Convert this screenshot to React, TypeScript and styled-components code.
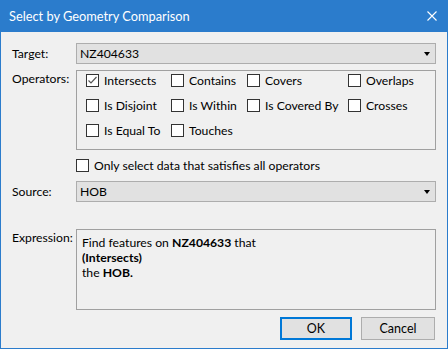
import React from 'react';
import styled, { createGlobalStyle } from 'styled-components';

const GlobalStyle = createGlobalStyle`
  body {
    margin: 0;
    background: #ffffff;
    font-family: Lato, 'Noto Sans', sans-serif;
    font-size: 12.2px;
    color: #000000;
  }
`;

const Window = styled.div`
  width: 448px;
  height: 349px;
  box-sizing: border-box;
  border: 1px solid #2b7ccc;
  border-top: none;
  background: #f0f0f0;
  display: flex;
  flex-direction: column;
`;

const TitleBar = styled.div`
  height: 31px;
  margin: 0 -1px;
  background: #2b7ccc;
  color: #ffffff;
  display: flex;
  align-items: center;
  justify-content: space-between;
  padding: 0 11px 1px 9px;
  font-size: 12.8px;
`;

const CloseIcon = () => (
  <svg width="10" height="10" viewBox="0 0 10 10">
    <path d="M0.5 0.5 L9.5 9.5 M9.5 0.5 L0.5 9.5" stroke="#ffffff" strokeWidth="1.1" />
  </svg>
);

const Body = styled.div`
  flex: 1;
  padding: 11px 11px 0 11px;
  display: flex;
  flex-direction: column;
`;

const Row = styled.div<{ $top?: number }>`
  display: grid;
  grid-template-columns: 64px 1fr;
  margin-top: ${(p) => p.$top ?? 0}px;
`;

const Label = styled.div<{ $pad?: number }>`
  padding-top: ${(p) => p.$pad ?? 3}px;
  line-height: 15px;
`;

const Combo = styled.div`
  height: 21px;
  box-sizing: border-box;
  background: #e1e1e1;
  border: 1px solid #adadad;
  display: flex;
  align-items: center;
  justify-content: space-between;
  padding: 0 5px 0 3px;
`;

const Arrow = styled.span`
  width: 0;
  height: 0;
  border-left: 3.5px solid transparent;
  border-right: 3.5px solid transparent;
  border-top: 4px solid #000000;
`;

const GroupBox = styled.div`
  height: 80px;
  box-sizing: border-box;
  border: 1px solid #a0a0a0;
  padding: 3px 0 0 9px;
  display: grid;
  grid-template-columns: 85px 76px 101px auto;
  grid-auto-rows: 25px;
`;

const Check = styled.label`
  display: flex;
  align-items: flex-start;
  gap: 5px;
  line-height: 13px;
  white-space: nowrap;
`;

const Box = styled.span`
  width: 13px;
  height: 13px;
  box-sizing: border-box;
  border: 1px solid #333333;
  background: #ffffff;
  flex: none;
  display: flex;
  align-items: center;
  justify-content: center;
`;

const CheckBox = ({ label, checked }: { label: string; checked?: boolean }) => (
  <Check>
    <Box>
      {checked && (
        <svg width="11" height="11" viewBox="0 0 11 11">
          <path d="M1.5 5.5 L4 8 L9.5 2" fill="none" stroke="#555555" strokeWidth="1.2" />
        </svg>
      )}
    </Box>
    {label}
  </Check>
);

const Expression = styled.div`
  height: 81px;
  box-sizing: border-box;
  border: 1px solid #a0a0a0;
  padding: 5px 5px;
  line-height: 15px;
  b {
    font-weight: 700;
  }
`;

const Buttons = styled.div`
  display: flex;
  justify-content: flex-end;
  gap: 9px;
  margin-top: 7px;
  padding-right: 1px;
`;

const Button = styled.button<{ $primary?: boolean }>`
  width: ${(p) => (p.$primary ? 72 : 74)}px;
  height: 23px;
  box-sizing: border-box;
  background: #e1e1e1;
  border: ${(p) => (p.$primary ? '2px solid #0078d7' : '1px solid #adadad')};
  font-family: inherit;
  font-size: 12.5px;
  color: #000000;
  padding: 0;
`;

const operators: { label: string; checked?: boolean }[] = [
  { label: 'Intersects', checked: true },
  { label: 'Contains' },
  { label: 'Covers' },
  { label: 'Overlaps' },
  { label: 'Is Disjoint' },
  { label: 'Is Within' },
  { label: 'Is Covered By' },
  { label: 'Crosses' },
  { label: 'Is Equal To' },
  { label: 'Touches' },
];

const App = () => {
  return (
    <>
      <GlobalStyle />
      <Window>
        <TitleBar>
          <span>Select by Geometry Comparison</span>
          <CloseIcon />
        </TitleBar>
        <Body>
          <Row>
            <Label>Target:</Label>
            <Combo>
              NZ404633
              <Arrow />
            </Combo>
          </Row>
          <Row $top={6}>
            <Label $pad={1}>Operators:</Label>
            <GroupBox>
              {operators.map((op) => (
                <CheckBox key={op.label} label={op.label} checked={op.checked} />
              ))}
            </GroupBox>
          </Row>
          <Row $top={9}>
            <span />
            <CheckBox label="Only select data that satisfies all operators" />
          </Row>
          <Row $top={9}>
            <Label>Source:</Label>
            <Combo>
              HOB
              <Arrow />
            </Combo>
          </Row>
          <Row $top={27}>
            <Label $pad={1}>Expression:</Label>
            <Expression>
              Find features on <b>NZ404633</b> that
              <br />
              <b>(Intersects)</b>
              <br />
              the <b>HOB.</b>
            </Expression>
          </Row>
          <Buttons>
            <Button $primary>OK</Button>
            <Button>Cancel</Button>
          </Buttons>
        </Body>
      </Window>
    </>
  );
};

export default App;
